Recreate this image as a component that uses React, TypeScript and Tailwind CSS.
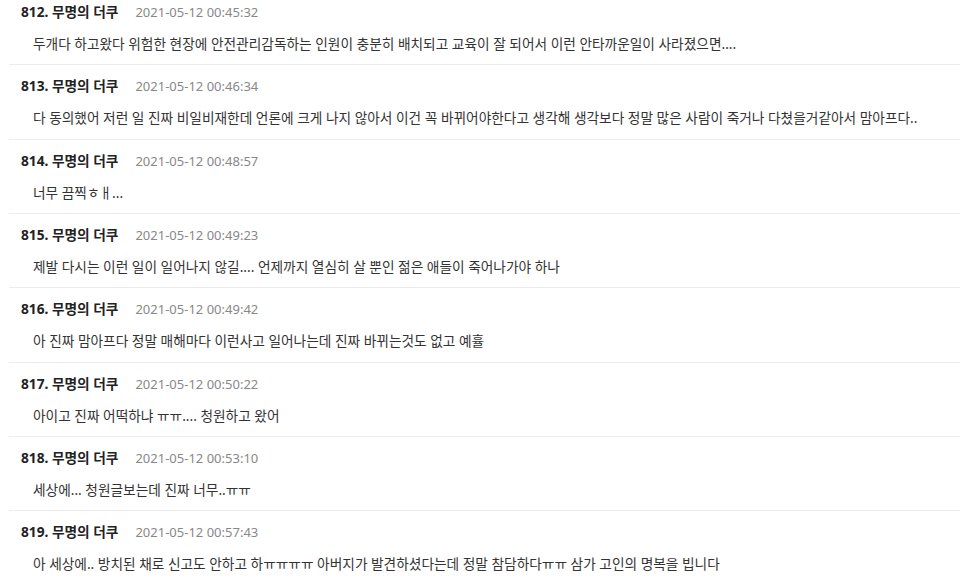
import React from "react";

const items = [
  { n: 812, t: "2021-05-12 00:45:32", c: "두개다 하고왔다 위험한 현장에 안전관리감독하는 인원이 충분히 배치되고 교육이 잘 되어서 이런 안타까운일이 사라졌으면...." },
  { n: 813, t: "2021-05-12 00:46:34", c: "다 동의했어 저런 일 진짜 비일비재한데 언론에 크게 나지 않아서 이건 꼭 바뀌어야한다고 생각해 생각보다 정말 많은 사람이 죽거나 다쳤을거같아서 맘아프다.." },
  { n: 814, t: "2021-05-12 00:48:57", c: "너무 끔찍ㅎㅐ..." },
  { n: 815, t: "2021-05-12 00:49:23", c: "제발 다시는 이런 일이 일어나지 않길.... 언제까지 열심히 살 뿐인 젊은 애들이 죽어나가야 하나" },
  { n: 816, t: "2021-05-12 00:49:42", c: "아 진짜 맘아프다 정말 매해마다 이런사고 일어나는데 진짜 바뀌는것도 없고 예휼" },
  { n: 817, t: "2021-05-12 00:50:22", c: "아이고 진짜 어떡하냐 ㅠㅠ.... 청원하고 왔어" },
  { n: 818, t: "2021-05-12 00:53:10", c: "세상에... 청원글보는데 진짜 너무..ㅠㅠ" },
  { n: 819, t: "2021-05-12 00:57:43", c: "아 세상에.. 방치된 채로 신고도 안하고 하ㅠㅠㅠㅠ 아버지가 발견하셨다는데 정말 참담하다ㅠㅠ 삼가 고인의 명복을 빕니다" },
];

export default function App() {
  return (
    <div
      className="w-[960px] h-[581px] overflow-hidden bg-white"
      style={{ fontFamily: '"Noto Sans", "Noto Sans CJK KR", sans-serif' }}
    >
      <ul className="ml-[9px]">
        {items.map((it, i) => (
          <li
            key={it.n}
            className={`border-b border-[#ececec] px-[12px] pb-[10.33px] ${i === 0 ? "pt-[2px]" : "pt-[11px]"}`}
          >
            <div className="flex items-center h-[20px] leading-[20px]">
              <span className="font-bold text-[13.7px] text-[#222]">{it.n}. 무명의 더쿠</span>
              <span className="ml-[17px] text-[13px] text-[#888]">{it.t}</span>
            </div>
            <div className="mt-[12px] pl-[12px] h-[20px] text-[13.7px] leading-[20px] text-[#333] whitespace-nowrap">
              {it.c}
            </div>
          </li>
        ))}
      </ul>
    </div>
  );
}
